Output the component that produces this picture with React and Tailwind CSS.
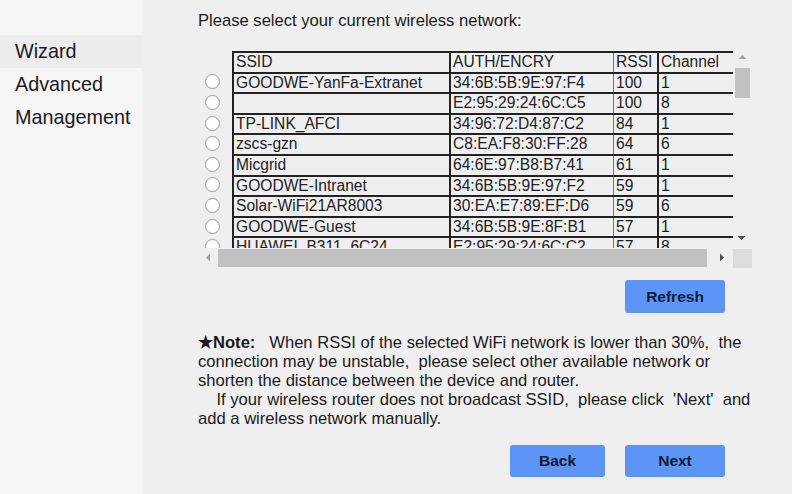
const networks = [
    { ssid: 'GOODWE-YanFa-Extranet', auth: '34:6B:5B:9E:97:F4', rssi: '100', ch: '1' },
    { ssid: '', auth: 'E2:95:29:24:6C:C5', rssi: '100', ch: '8' },
    { ssid: 'TP-LINK_AFCI', auth: '34:96:72:D4:87:C2', rssi: '84', ch: '1' },
    { ssid: 'zscs-gzn', auth: 'C8:EA:F8:30:FF:28', rssi: '64', ch: '6' },
    { ssid: 'Micgrid', auth: '64:6E:97:B8:B7:41', rssi: '61', ch: '1' },
    { ssid: 'GOODWE-Intranet', auth: '34:6B:5B:9E:97:F2', rssi: '59', ch: '1' },
    { ssid: 'Solar-WiFi21AR8003', auth: '30:EA:E7:89:EF:D6', rssi: '59', ch: '6' },
    { ssid: 'GOODWE-Guest', auth: '34:6B:5B:9E:8F:B1', rssi: '57', ch: '1' },
    { ssid: 'HUAWEI_B311_6C24', auth: 'E2:95:29:24:6C:C2', rssi: '57', ch: '8' },
];

function Row({ cells, radio }) {
    return (
        <div className="flex h-[20.6px] w-max">
            <div className="w-[32px] shrink-0 flex items-center pl-[5px]">
                {radio && (
                    <span className="block w-[15px] h-[15px] rounded-full border border-[#9a9a9a] bg-white"></span>
                )}
            </div>
            <div className="flex shrink-0 border-t-2 border-[#222] border-l-2">
                <div className="w-[217px] shrink-0 pl-[2px] leading-[18px] border-r-2 border-[#222]">{cells[0]}</div>
                <div className="w-[163px] shrink-0 pl-[2px] leading-[18px] border-r border-[#777]">{cells[1]}</div>
                <div className="w-[45px] shrink-0 pl-[2px] leading-[18px] border-r-2 border-[#222]">{cells[2]}</div>
                <div className="w-[110px] shrink-0 pl-[2px] leading-[18px]">{cells[3]}</div>
            </div>
        </div>
    );
}

export default function App() {
    return (
        <div className="flex w-[792px] h-[494px] bg-[#efefef] text-[#1a1a1a] font-['Liberation_Sans',Arial,sans-serif] overflow-hidden">
            {/* Sidebar */}
            <aside className="w-[142px] shrink-0 bg-[#f5f5f5] pt-[35px] text-[19.8px]">
                <div className="h-[33px] flex items-center pl-[15px] bg-[#ececec]">Wizard</div>
                <div className="h-[33px] flex items-center pl-[15px]">Advanced</div>
                <div className="h-[33px] flex items-center pl-[15px]">Management</div>
            </aside>

            {/* Main */}
            <main className="pl-[56px] pt-[12px] w-[610px]">
                <div className="text-[16.6px] leading-[18px]">Please select your current wireless network:</div>

                {/* Scroll box */}
                <div className="ml-[2px] mt-[21px] w-[552px] grid grid-cols-[533px_19px] grid-rows-[197px_20px]">
                    <div className="overflow-hidden text-[15.6px] text-[#222]">
                        <Row cells={['SSID', 'AUTH/ENCRY', 'RSSI', 'Channel']} />
                        {networks.map((n, i) => (
                            <Row key={i} radio cells={[n.ssid, n.auth, n.rssi, n.ch]} />
                        ))}
                    </div>
                    {/* vertical scrollbar */}
                    <div className="relative">
                        <svg className="absolute left-[5px] top-[3px]" width="9" height="6" viewBox="0 0 9 6">
                            <path d="M0.5 5 L4.5 1 L8.5 5 Z" fill="#a3a3a3" />
                        </svg>
                        <div className="absolute left-[2px] top-[17px] w-[15px] h-[30px] bg-[#c1c1c1]"></div>
                        <svg className="absolute left-[4px] top-[184px]" width="9" height="6" viewBox="0 0 9 6">
                            <path d="M0.5 1 L4.5 5 L8.5 1 Z" fill="#4f4f4f" />
                        </svg>
                    </div>
                    {/* horizontal scrollbar */}
                    <div className="relative">
                        <svg className="absolute left-[5px] top-[5px]" width="6" height="9" viewBox="0 0 6 9">
                            <path d="M5 0.5 L1 4.5 L5 8.5 Z" fill="#a3a3a3" />
                        </svg>
                        <div className="absolute left-[18px] top-[1px] w-[489px] h-[18px] bg-[#c1c1c1]"></div>
                        <svg className="absolute left-[519px] top-[5px]" width="6" height="9" viewBox="0 0 6 9">
                            <path d="M1 0.5 L5 4.5 L1 8.5 Z" fill="#4f4f4f" />
                        </svg>
                    </div>
                    <div className="bg-[#dcdcdc] mt-[1px]"></div>
                </div>

                <div className="mt-[12px] ml-[427px] w-[100px] h-[33px] rounded-[3px] bg-[#5c95f6] flex items-center justify-center font-bold text-[15.5px] text-[#0e1a33]">
                    Refresh
                </div>

                <div className="mt-[20px] text-[16.6px] leading-[19px] text-[#1a1a1a] whitespace-pre">
                    <div><b>★Note:</b>{'   When RSSI of the selected WiFi network is lower than 30%,  the'}</div>
                    <div>{'connection may be unstable,  please select other available network or'}</div>
                    <div>{'shorten the distance between the device and router.'}</div>
                    <div>{'    If your wireless router does not broadcast SSID,  please click  \'Next\'  and'}</div>
                    <div>{'add a wireless network manually.'}</div>
                </div>

                <div className="mt-[17px] flex gap-[20px] pl-[312px]">
                    <div className="w-[95px] h-[32px] rounded-[3px] bg-[#5c95f6] flex items-center justify-center font-bold text-[15.5px] text-[#0e1a33]">
                        Back
                    </div>
                    <div className="w-[100px] h-[32px] rounded-[3px] bg-[#5c95f6] flex items-center justify-center font-bold text-[15.5px] text-[#0e1a33]">
                        Next
                    </div>
                </div>
            </main>
        </div>
    );
}
